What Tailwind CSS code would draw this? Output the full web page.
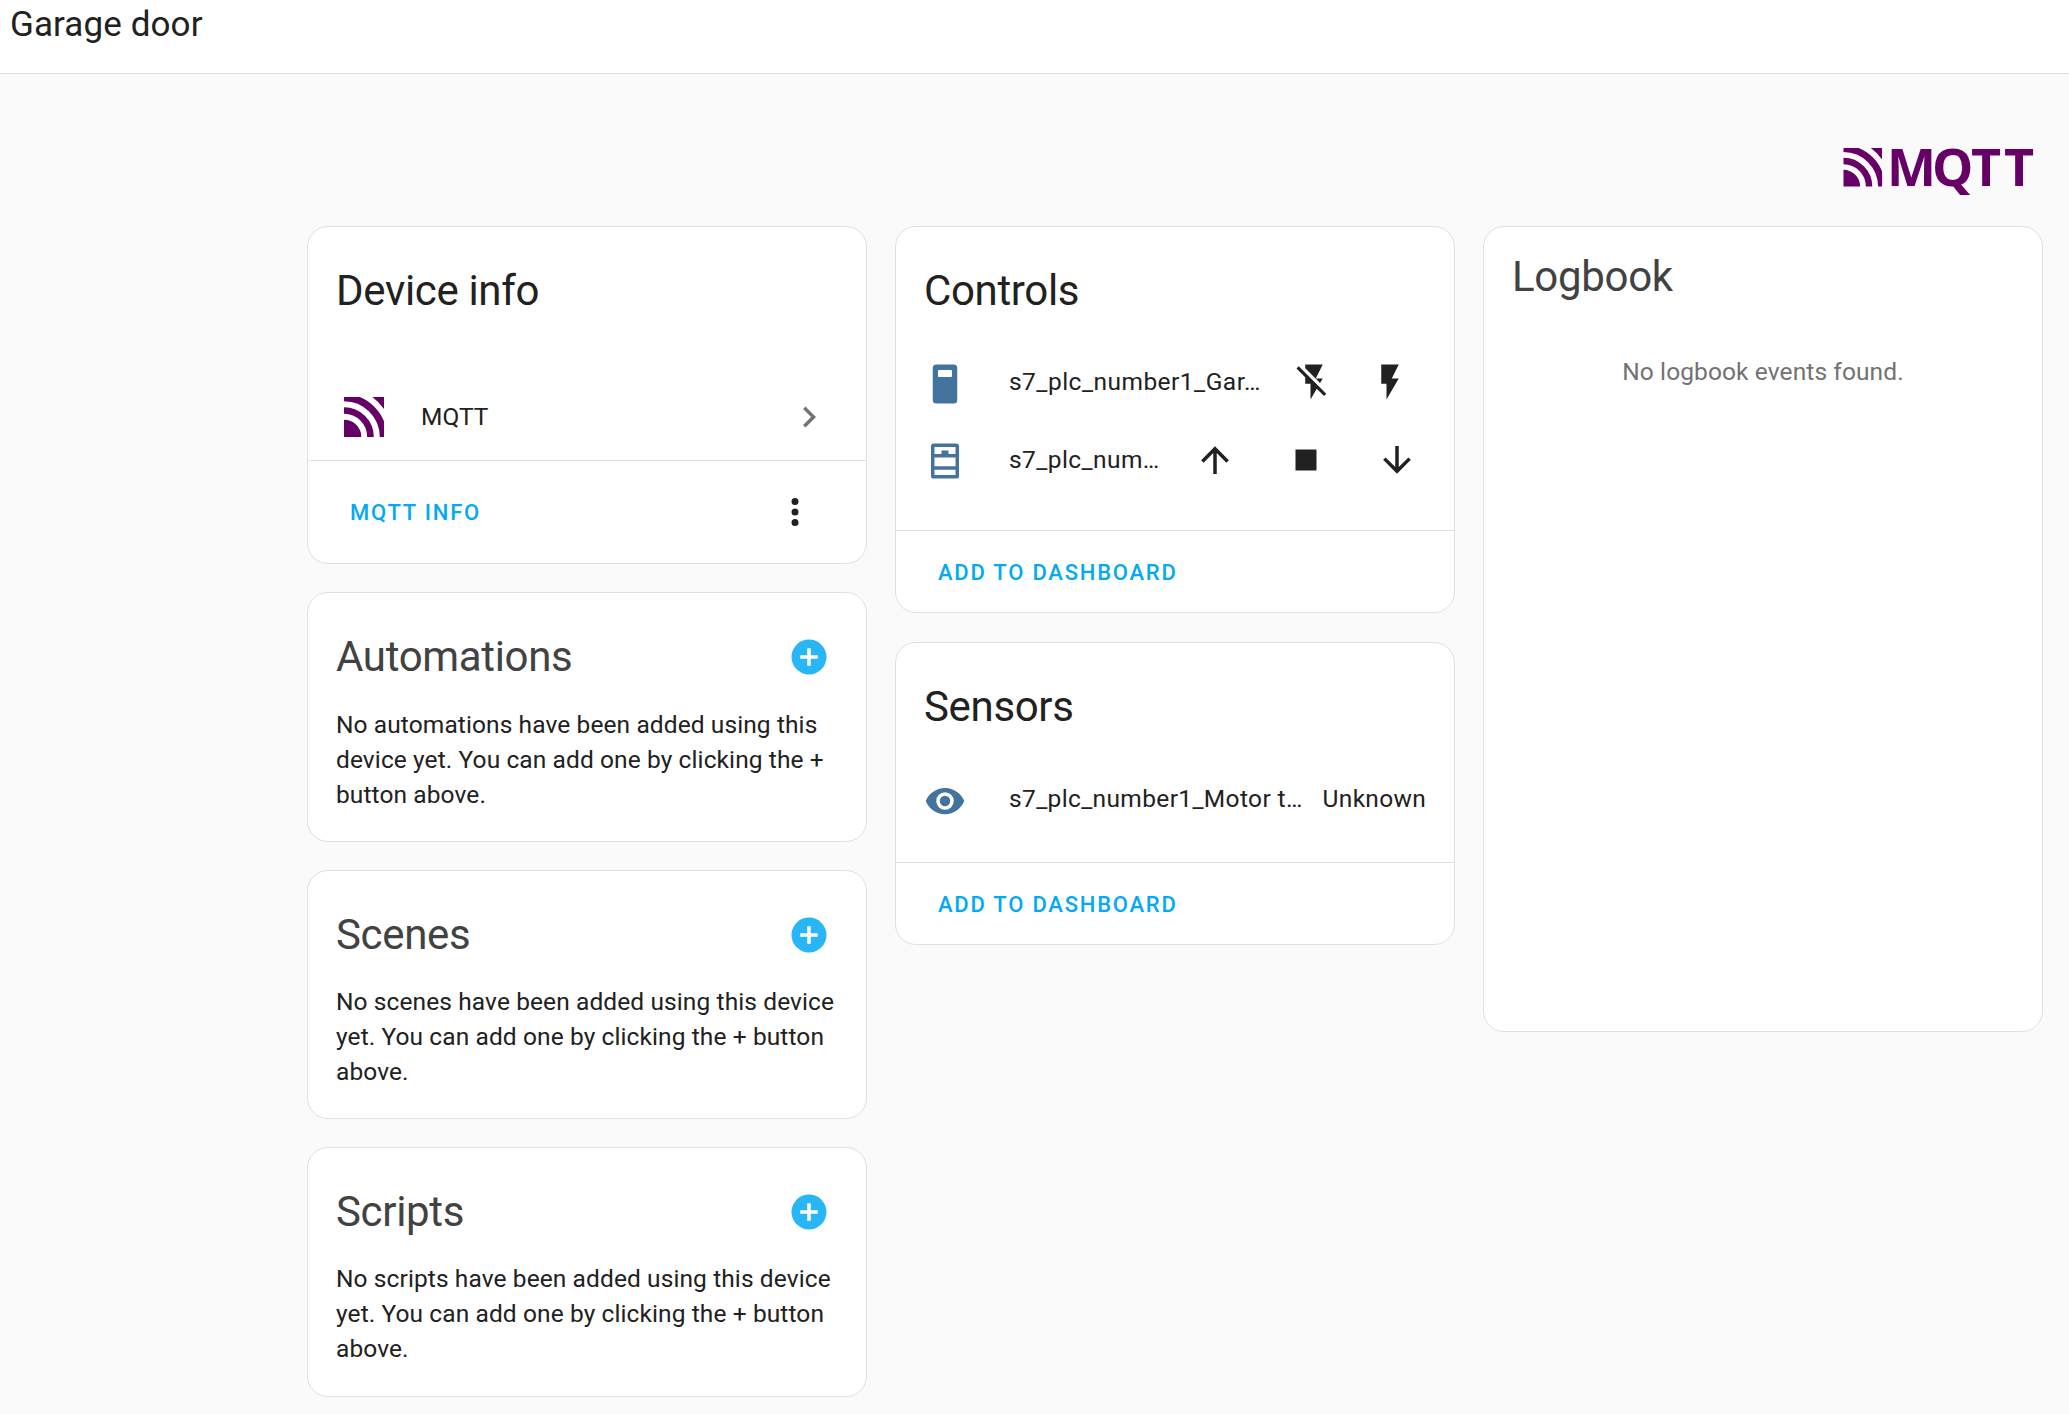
<!DOCTYPE html>
<html lang="en">
<head>
<meta charset="utf-8">
<title>Garage door</title>
<script src="https://cdn.jsdelivr.net/npm/@tailwindcss/browser@4"></script>
</head>
<body class="h-[1414px] w-[2069px] overflow-hidden bg-[#fafafa] font-['Roboto',sans-serif] text-[24.5px] leading-[35px] tracking-[0.1px] text-[#212121]">
<svg class="hidden">
  <symbol id="mqtt" viewBox="0 0 120 120">
    <clipPath id="box"><rect width="120" height="120" rx="4"/></clipPath>
    <g clip-path="url(#box)">
      <circle cx="0" cy="120" r="52" fill="#660066"/>
      <circle cx="0" cy="120" r="79.5" fill="none" stroke="#660066" stroke-width="20"/>
      <circle cx="0" cy="120" r="118" fill="none" stroke="#660066" stroke-width="21"/>
      <path d="M85 0A147 147 0 0 1 120 36V0Z" fill="#660066"/>
    </g>
  </symbol>
  <symbol id="plus" viewBox="0 0 24 24"><path fill="currentColor" d="M17,13H13V17H11V13H7V11H11V7H13V11H17M12,2A10,10 0 0,0 2,12A10,10 0 0,0 12,22A10,10 0 0,0 22,12A10,10 0 0,0 12,2Z"/></symbol>
</svg>

<header class="h-[74px] border-b border-[#e0e0e0] bg-white pl-[10px] text-[35px] leading-[50px]">Garage door</header>

<div class="flex h-[152px] items-start justify-end pr-[34px] pt-[74px]">
  <svg class="h-[50px] w-[193px] overflow-visible" viewBox="0 0 193 50">
    <use href="#mqtt" x="1.500" y="0" width="38.6" height="38.6"/>
    <g fill="#660066" font-family="Open Sans" font-weight="700" font-size="52">
      <text x="45" y="38">M</text><text x="90" y="38">Q</text><text x="129" y="38">T</text><text x="162" y="38">T</text>
    </g>
  </svg>
</div>

<main class="flex items-start gap-7 pl-[307px]">
  <div class="flex w-[560px] flex-col gap-7">
    <section class="h-[338px] rounded-[21px] border border-[#e0e0e0] bg-white">
      <h1 class="px-7 pt-[36px] text-[42px] leading-[56px] tracking-[-0.34px]">Device info</h1>
      <div class="mt-[56px] flex h-[85px] items-center pb-0.5 pl-9 pr-9">
        <svg class="size-[40px]"><use href="#mqtt"/></svg>
        <span class="ml-9 flex-1 pl-px">MQTT</span>
        <svg class="size-[42px] text-[#727272]" viewBox="0 0 24 24"><path fill="currentColor" d="M8.59,16.58L13.17,12L8.59,7.41L10,6L16,12L10,18L8.59,16.58Z"/></svg>
      </div>
      <div class="flex h-[103px] items-center justify-between border-t border-[#e0e0e0] pl-[42px] pr-[50px]">
        <span class="text-[22px] font-medium tracking-[1.77px] text-[#03a9f4]">MQTT INFO</span>
        <svg class="size-[42px]" viewBox="0 0 24 24"><path fill="currentColor" d="M12,16A2,2 0 0,1 14,18A2,2 0 0,1 12,20A2,2 0 0,1 10,18A2,2 0 0,1 12,16M12,10A2,2 0 0,1 14,12A2,2 0 0,1 12,14A2,2 0 0,1 10,12A2,2 0 0,1 12,10M12,4A2,2 0 0,1 14,6A2,2 0 0,1 12,8A2,2 0 0,1 10,6A2,2 0 0,1 12,4Z"/></svg>
      </div>
    </section>

    <section class="h-[249.5px] rounded-[21px] border border-[#e0e0e0] bg-white pl-7 pr-[28px] pt-[36px]">
      <div class="flex h-14 items-center justify-between pr-[8px]">
        <h1 class="text-[42px] leading-[56px] tracking-[-0.34px] text-[#424242]">Automations</h1>
        <svg class="size-[42px] text-[#28b6f6]"><use href="#plus"/></svg>
      </div>
      <p class="pt-[21.5px]">No automations have been added using this device yet. You can add one by clicking the + button above.</p>
    </section>

    <section class="h-[249.5px] rounded-[21px] border border-[#e0e0e0] bg-white pl-7 pr-[28px] pt-[36px]">
      <div class="flex h-14 items-center justify-between pr-[8px]">
        <h1 class="text-[42px] leading-[56px] tracking-[-0.34px] text-[#424242]">Scenes</h1>
        <svg class="size-[42px] text-[#28b6f6]"><use href="#plus"/></svg>
      </div>
      <p class="pt-[21px]">No scenes have been added using this device yet. You can add one by clicking the + button above.</p>
    </section>

    <section class="h-[249.5px] rounded-[21px] border border-[#e0e0e0] bg-white pl-7 pr-[28px] pt-[36px]">
      <div class="flex h-14 items-center justify-between pr-[8px]">
        <h1 class="text-[42px] leading-[56px] tracking-[-0.34px] text-[#424242]">Scripts</h1>
        <svg class="size-[42px] text-[#28b6f6]"><use href="#plus"/></svg>
      </div>
      <p class="pt-[21px]">No scripts have been added using this device yet. You can add one by clicking the + button above.</p>
    </section>
  </div>

  <div class="flex w-[560px] flex-col gap-[29px]">
    <section class="h-[387px] rounded-[21px] border border-[#e0e0e0] bg-white">
      <h1 class="px-7 pt-[36px] text-[42px] leading-[56px] tracking-[-0.34px]">Controls</h1>
      <div class="mt-[24px] flex h-[77px] items-center pl-7 pr-[43.5px]">
        <svg class="mt-[5px] size-[42px] text-[#44739e]" viewBox="0 0 24 24"><path fill="currentColor" fill-rule="evenodd" d="M7 .8H17A2 2 0 0 1 19 2.8V21.2A2 2 0 0 1 17 23.2H7A2 2 0 0 1 5 21.2V2.8A2 2 0 0 1 7 .8ZM8.6 4A.6 .6 0 0 0 8 4.600V7.400A.6 .6 0 0 0 8.6 8H15.4A.6 .6 0 0 0 16 7.400V4.600A.6 .6 0 0 0 15.4 4Z"/></svg>
        <span class="ml-[43px] flex-1 whitespace-nowrap tracking-[0.48px]">s7_plc_number1_Gar…</span>
        <div class="flex gap-[34px]">
          <svg class="size-[42px]" viewBox="0 0 24 24"><path fill="currentColor" d="M17,10H13L17,2H7V4.18L15.46,12.64M3.27,3L2,4.27L7,9.27V13H10V22L13.58,15.86L17.73,20L19,18.73L3.27,3Z"/></svg>
          <svg class="size-[42px]" viewBox="0 0 24 24"><path fill="currentColor" d="M7,2V13H10V22L17,10H13L17,2H7Z"/></svg>
        </div>
      </div>
      <div class="flex h-[79px] items-center pl-7 pr-[36px]">
        <svg class="mt-[3px] size-[42px] text-[#44739e]" viewBox="0 0 24 24"><path fill="currentColor" fill-rule="evenodd" d="M5.500 2H18.500A1.500 1.500 0 0 1 20 3.500V20.500A1.500 1.500 0 0 1 18.500 22H5.500A1.500 1.500 0 0 1 4 20.500V3.500A1.500 1.500 0 0 1 5.500 2ZM6 4V8H10V6H14V8H18V4ZM6 10V15H18V10ZM6 17V20H18V17Z"/></svg>
        <span class="ml-[43px] flex-1 whitespace-nowrap tracking-[0.42px]">s7_plc_num…</span>
        <div class="flex gap-[49px]">
          <svg class="size-[42px]" viewBox="0 0 24 24"><path fill="currentColor" d="M13,20H11V8L5.5,13.5L4.08,12.08L12,4.16L19.92,12.08L18.5,13.5L13,8V20Z"/></svg>
          <svg class="size-[42px]" viewBox="0 0 24 24"><path fill="currentColor" d="M18,18H6V6H18V18Z"/></svg>
          <svg class="size-[42px]" viewBox="0 0 24 24"><path fill="currentColor" d="M11,4H13V16L18.5,10.5L19.92,11.92L12,19.84L4.08,11.92L5.5,10.5L11,16V4Z"/></svg>
        </div>
      </div>
      <div class="mt-[31px] flex h-[83px] items-center border-t border-[#e0e0e0] pl-[42px] text-[22px] font-medium tracking-[1.77px] text-[#03a9f4]">ADD TO DASHBOARD</div>
    </section>

    <section class="h-[303px] rounded-[21px] border border-[#e0e0e0] bg-white">
      <h1 class="px-7 pt-[36px] text-[42px] leading-[56px] tracking-[-0.34px]">Sensors</h1>
      <div class="mt-[22px] flex h-[82px] items-center pl-7 pr-7">
        <svg class="mt-[5px] size-[42px] text-[#44739e]" viewBox="0 0 24 24"><path fill="currentColor" d="M12,9A3,3 0 0,0 9,12A3,3 0 0,0 12,15A3,3 0 0,0 15,12A3,3 0 0,0 12,9M12,17A5,5 0 0,1 7,12A5,5 0 0,1 12,7A5,5 0 0,1 17,12A5,5 0 0,1 12,17M12,4.5C7,4.5 2.73,7.61 1,12C2.73,16.39 7,19.5 12,19.5C17,19.5 21.27,16.39 23,12C21.27,7.61 17,4.5 12,4.5Z"/></svg>
        <span class="ml-[43px] flex-1 whitespace-nowrap tracking-[0.36px]">s7_plc_number1_Motor t…</span>
        <span class="tracking-[0.3px]">Unknown</span>
      </div>
      <div class="mt-[23px] flex h-[83px] items-center border-t border-[#e0e0e0] pl-[42px] text-[22px] font-medium tracking-[1.77px] text-[#03a9f4]">ADD TO DASHBOARD</div>
    </section>
  </div>

  <section class="h-[806px] w-[560px] rounded-[21px] border border-[#e0e0e0] bg-white">
    <h1 class="px-7 pt-[22px] text-[42px] leading-[56px] tracking-[-0.3px] text-[#424242]">Logbook</h1>
    <p class="pt-[49px] text-center text-[#727272]">No logbook events found.</p>
  </section>
</main>
</body>
</html>
